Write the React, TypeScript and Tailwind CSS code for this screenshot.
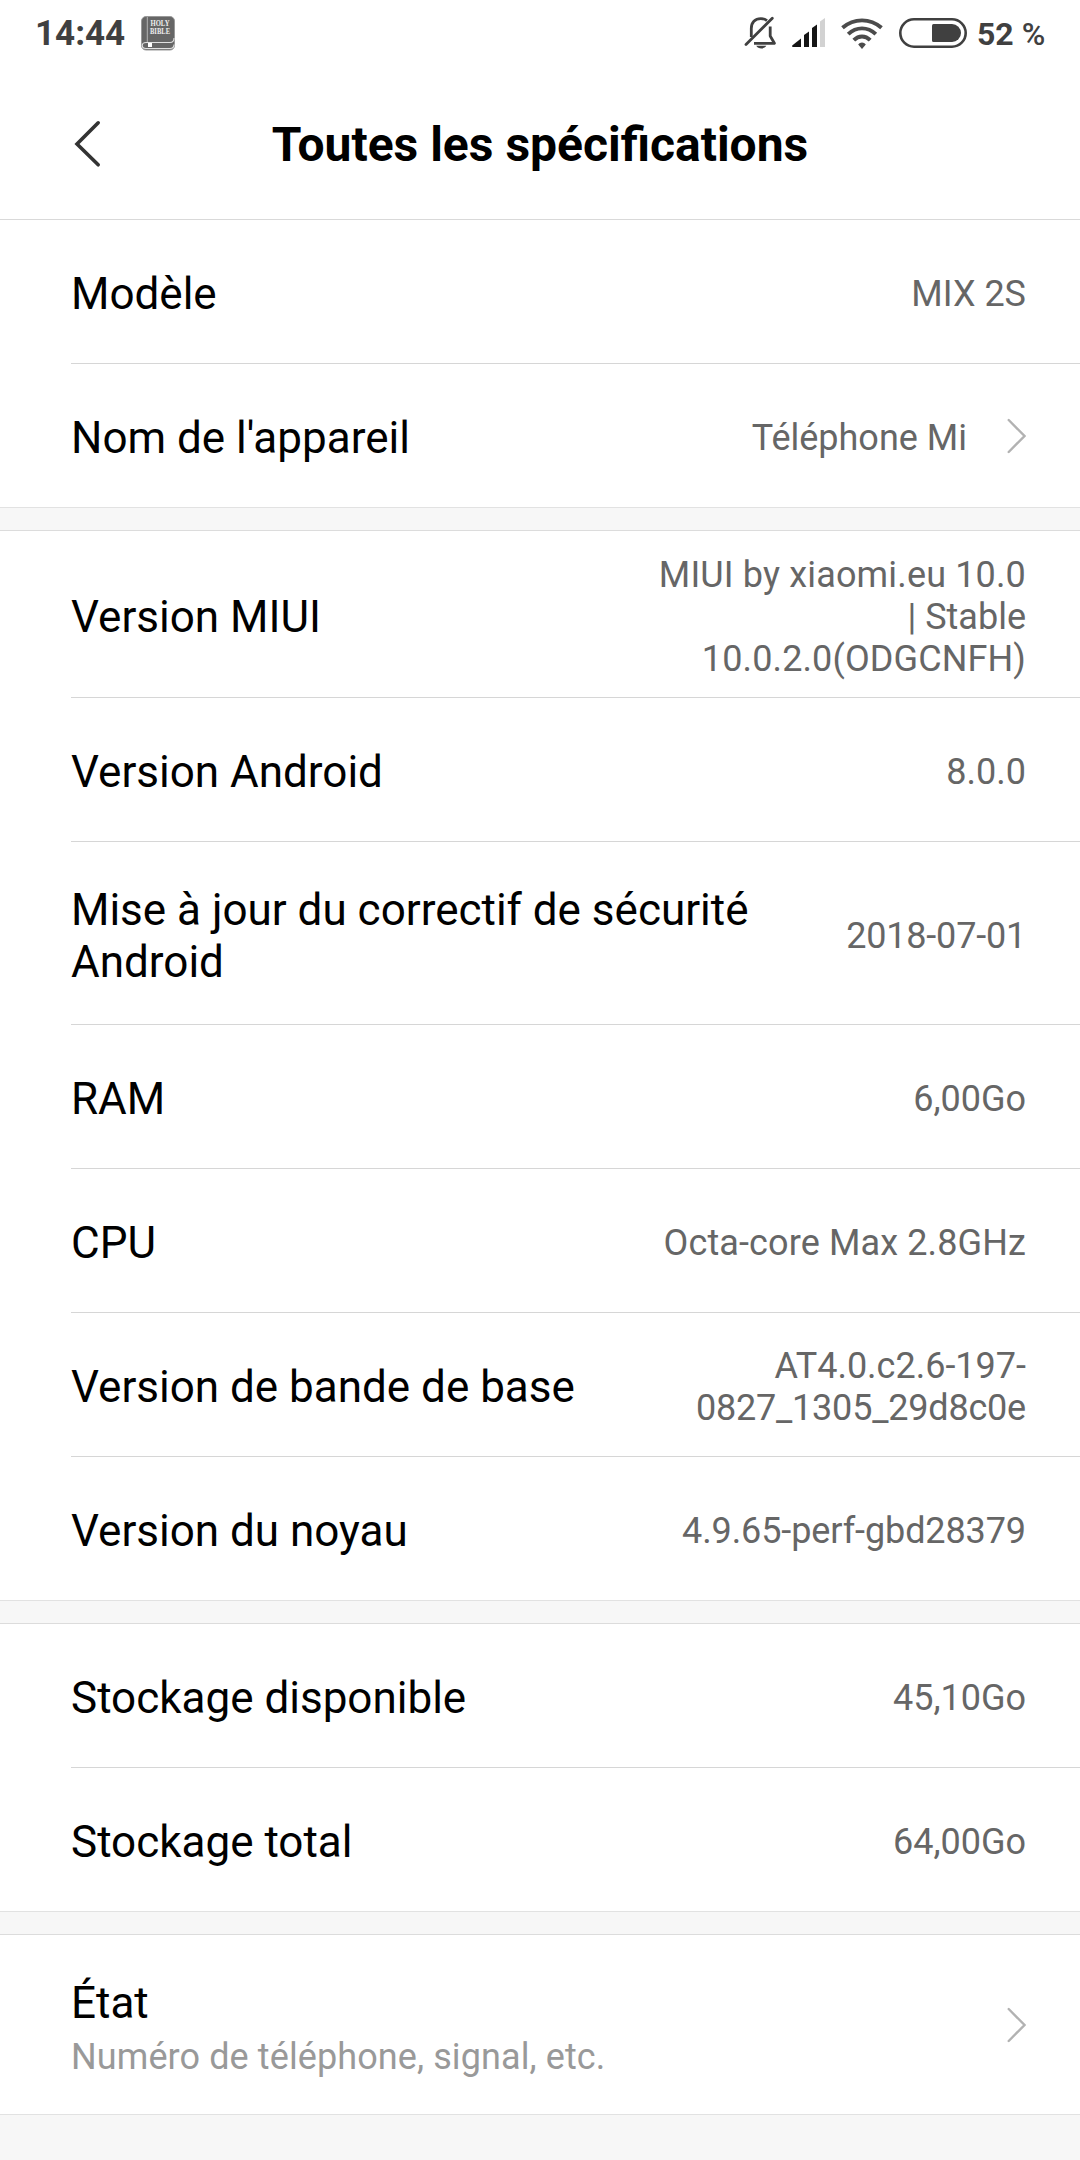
type Line = { text: string; tracking?: string };

type RowData = {
  label: string;
  value?: Line[];
  hint?: string;
  arrow?: boolean;
  size?: string;
};

const SECTIONS: RowData[][] = [
  [
    { label: 'Modèle', value: [{ text: 'MIX 2S' }] },
    { label: "Nom de l'appareil", value: [{ text: 'Téléphone Mi' }], arrow: true },
  ],
  [
    {
      label: 'Version MIUI',
      value: [
        { text: 'MIUI by xiaomi.eu 10.0', tracking: 'tracking-[0.15px]' },
        { text: '| Stable' },
        { text: '10.0.2.0(ODGCNFH)', tracking: 'tracking-[0.12px]' },
      ],
      size: 'h-[167px]',
    },
    { label: 'Version Android', value: [{ text: '8.0.0' }] },
    {
      label: 'Mise à jour du correctif de sécurité Android',
      value: [{ text: '2018-07-01', tracking: 'tracking-[-0.2px]' }],
      size: 'h-[183px]',
    },
    { label: 'RAM', value: [{ text: '6,00Go' }] },
    { label: 'CPU', value: [{ text: 'Octa-core Max 2.8GHz', tracking: 'tracking-[0.12px]' }] },
    {
      label: 'Version de bande de base',
      value: [{ text: 'AT4.0.c2.6-197-' }, { text: '0827_1305_29d8c0e', tracking: 'tracking-[-0.2px]' }],
    },
    { label: 'Version du noyau', value: [{ text: '4.9.65-perf-gbd28379', tracking: 'tracking-[-0.1px]' }] },
  ],
  [
    { label: 'Stockage disponible', value: [{ text: '45,10Go' }] },
    { label: 'Stockage total', value: [{ text: '64,00Go' }] },
  ],
  [{ label: 'État', hint: 'Numéro de téléphone, signal, etc.', arrow: true, size: 'h-[180px]' }],
];

function BookIcon() {
  return (
    <svg width="34" height="35" viewBox="0 0 34 35" className="ml-[17px]">
      <rect x="0.5" y="0.5" width="33" height="33.5" rx="4.5" fill="#666" stroke="#999" />
      <path d="M6.3 1v25.5" stroke="#bbb" strokeWidth="0.9" />
      <path d="M33 22c0 3-1.5 4.500-4 4.500H5c-5 0-5 6 0 6h24c2.500 0 4-1.500 4-4" fill="none" stroke="#e0e0e0" strokeWidth="1.100" />
      <rect x="7" y="27" width="4" height="4" fill="#fff" />
      <text x="19" y="10.300" textAnchor="middle" textLength="19" lengthAdjust="spacingAndGlyphs" fontFamily="Liberation Serif, serif" fontSize="7.500" fill="#eee">HOLY</text>
      <text x="19" y="17.600" textAnchor="middle" textLength="20" lengthAdjust="spacingAndGlyphs" fontFamily="Liberation Serif, serif" fontSize="7.500" fill="#eee">BIBLE</text>
    </svg>
  );
}

function MutedBellIcon() {
  return (
    <svg width="33" height="34" viewBox="0 0 33 34" fill="none" stroke="#404040" strokeWidth="2.800">
      <path d="M7.300 21V12.500C7.300 6.500 11 2.600 16.800 2.600c2.600 0 4.600.7 6.200 2" />
      <path d="M26.200 10.500v9.500l4.200 7.300H10" strokeLinejoin="round" />
      <path d="M2 28.500L28.300 2.200" strokeLinecap="round" />
      <path d="M12.300 29.800h10c-1.700 3.500-8.300 3.500-10 0z" fill="#404040" stroke="none" />
    </svg>
  );
}

function SignalIcon() {
  return (
    <svg width="33" height="30" viewBox="0 0 33 30" fill="#151515" className="ml-[15px]">
      <path d="M9 20.500V29H1c-1 0-1.300-1-.5-1.700z" />
      <path d="M12 17l5-3.500V29h-5z" />
      <path d="M20 10l5-3.500V29h-5z" />
      <path d="M28 3.500L33 0v29h-5z" fill="#d2d2d2" />
    </svg>
  );
}

function WifiIcon() {
  return (
    <svg width="42" height="31" viewBox="0 0 42 31" fill="none" stroke="#4b4b4b" strokeWidth="3.900" className="ml-4">
      <path d="M1.500 9.800c11.400-9.900 27.600-9.900 39 0" />
      <path d="M7.200 16.200c8.200-7.800 19.400-7.800 27.600 0" />
      <path d="M12.800 22.200c4.900-5 11.500-5 16.400 0" />
      <path d="M17.200 26.600c1.800-2.900 5.800-2.900 7.600 0L21 31z" fill="#4b4b4b" stroke="none" />
    </svg>
  );
}

function BatteryIcon() {
  return (
    <svg width="68" height="30" viewBox="0 0 68 30" className="ml-4">
      <rect x="1.300" y="1.300" width="65.400" height="27.400" rx="13.700" fill="none" stroke="#404040" strokeWidth="2.600" />
      <path d="M34.500 6H53a9 9 0 0 1 0 18H34.500a1.500 1.500 0 0 1-1.500-1.500v-15A1.500 1.500 0 0 1 34.500 6z" fill="#404040" />
    </svg>
  );
}

function StatusBar() {
  return (
    <div className="flex h-[66px] items-center px-9 font-bold text-[#404040]">
      <span className="-ml-px w-[89px] whitespace-nowrap pt-0.5 text-[35px]">14:44</span>
      <BookIcon />
      <div className="ml-auto flex items-center">
        <MutedBellIcon />
        <SignalIcon />
        <WifiIcon />
        <BatteryIcon />
        <span className="ml-2.5 w-[67px] whitespace-nowrap pt-0.5 text-[32px]">
          52 <span className="font-medium">%</span>
        </span>
      </div>
    </div>
  );
}

function Header() {
  return (
    <header className="relative flex h-[154px] items-center justify-center border-b border-[#d9d9d9] pt-1">
      <button className="absolute left-[74px] top-[54px]">
        <svg width="28" height="48" viewBox="0 0 28 48" fill="none" stroke="#333" strokeWidth="3.600" strokeLinecap="round">
          <path d="M24.200 2.800L3 24l21.200 20.800" />
        </svg>
      </button>
      <h1 className="text-[48px] font-bold leading-[56px] text-black">Toutes les spécifications</h1>
    </header>
  );
}

function Row({ row, last }: { row: RowData; last: boolean }) {
  const nudge = row.size ? 'pt-1.5' : 'pt-[5px]';

  return (
    <div className={`flex pl-[71px] ${last ? 'border-b border-[#e2e2e2]' : ''} ${row.size ?? 'h-36'}`}>
      <div className={`flex flex-1 items-center justify-between pr-[54px] ${last ? '' : 'border-b border-[#d6d6d6]'}`}>
        <div className={`max-w-[700px] ${nudge}`}>
          <div className="text-[44px] leading-[52px] text-black">{row.label}</div>
          {row.hint && <div className="mt-[7px] text-[36px] leading-[42px] tracking-[0.1px] text-[#999]">{row.hint}</div>}
        </div>
        <div className="flex items-center">
          {row.value && (
            <div className={`whitespace-nowrap text-right text-[36px] leading-[42px] text-[#666] ${nudge}`}>
              {row.value.map((line) => (
                <div key={line.text} className={line.tracking}>
                  {line.text}
                </div>
              ))}
            </div>
          )}
          {row.arrow && (
            <svg width="20" height="36" viewBox="0 0 20 36" fill="none" stroke="#b2b2b2" strokeWidth="2.400" strokeLinecap="round" className="ml-[39px]">
              <path d="M2.700 2L18.500 18 2.700 34" />
            </svg>
          )}
        </div>
      </div>
    </div>
  );
}

export default function App() {
  return (
    <div className="h-[2160px] w-[1080px] overflow-hidden bg-[#f7f7f7] font-['Roboto',sans-serif]">
      <div className="bg-white">
        <StatusBar />
        <Header />
      </div>
      {SECTIONS.map((rows, i) => (
        <section key={i}>
          {i > 0 && <div className="h-[23px] border-b border-[#dcdcdc]" />}
          <div className="bg-white">
            {rows.map((row, j) => (
              <Row key={row.label} row={row} last={j === rows.length - 1} />
            ))}
          </div>
        </section>
      ))}
    </div>
  );
}
